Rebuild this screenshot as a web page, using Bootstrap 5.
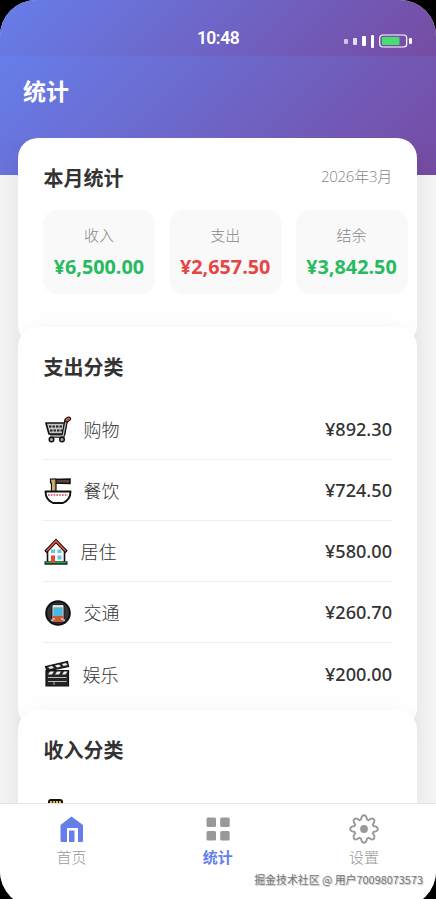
<!DOCTYPE html>
<html lang="zh-CN">
<head>
<meta charset="utf-8">
<meta name="viewport" content="width=device-width, initial-scale=1">
<title>统计</title>
<link href="https://cdn.jsdelivr.net/npm/bootstrap@5.3.0/dist/css/bootstrap.min.css" rel="stylesheet">
<style>
body{background:#000;height:899px;overflow:hidden;font-family:"Open Sans","Noto Sans CJK SC",sans-serif;color:#333}
.phone{height:907px;border-radius:36px;overflow:hidden;background:#f5f5f5}
.statusbar{height:56px;background:linear-gradient(135deg,#667eea,#764ba2);padding:20px 24px 0;color:#fff}
.clock{font-family:Roboto,sans-serif;font-size:17.5px;font-weight:600;line-height:36px;letter-spacing:-.5px}
.signal{gap:5px;margin-top:6px}
.bar{background:#fff;border-radius:1px;width:4px}
.b1{height:5px;opacity:.65}.b2{height:7px;opacity:.8}.b3{height:10px}.b4{height:13px;width:3px}
.hero{height:119px;background:linear-gradient(135deg,#667eea,#764ba2);padding:17px 23px}
.hero h1{font-size:23px;line-height:36px;font-weight:700;color:#fff;margin:0}
.content{height:665px;margin-top:-37px}
.scroller{height:665px;padding:0 19px 0 18px;overflow:hidden}
.panel{background:#fff;border-radius:20px;box-shadow:0 9px 30px rgba(0,0,0,.08);padding:26px 25px 0 25.4px}
.panel + .panel{margin-top:-18px}
.p-month{height:207px}.p-out{height:401px}.p-in{height:300px}
.panel h2{font-size:20px;line-height:30px;font-weight:700;margin:0}
.month{font-size:15px;font-weight:300;color:#888;line-height:25px;letter-spacing:-.25px}
.stats{display:grid;grid-template-columns:repeat(3,112px);gap:14.3px;margin-top:16px}
.stat{height:84px;background:#f9f9f9;border-radius:14px;padding-top:13px;text-align:center}
.stat span{display:block;font-size:15px;font-weight:300;line-height:24px;color:#888;margin-left:-1px}
.stat b{display:block;font-size:19.8px;line-height:28px;margin-top:6px;margin-left:-1px}
.inc{color:#27bb60}.exp{color:#e64545}
.rows{margin-top:16px}
.entry{height:61px;border-bottom:1px solid #eee}
.entry:last-child{border:0}
.entry svg{width:28px;height:28px;margin-left:1px;margin-right:11px;margin-top:1px;flex:none}
.entry .w-house{width:26px;margin-right:10px}
.entry .w-clap{width:27px}
.entry span{font-size:18px;font-weight:300;line-height:28px;padding-top:2px}
.entry b{font-family:"Noto Sans",sans-serif;font-size:18.1px;font-weight:500;padding-top:2px}
.tabs{height:104px;background:#fff;border-top:1px solid #e4e4e4;padding-top:10px;position:relative}
.tab-i{width:146.3px;text-align:center;color:#999;font-size:15px;font-weight:300;line-height:22px}
.tabs .first{width:143px}
.tab-i svg{display:block;width:30px;height:30px;margin:0 auto 2px}
.tab-i + .tab-i{padding-left:3px}
.tab-i.on span{color:#667eea;font-weight:700}
.credit{position:absolute;right:13px;top:66px;font-size:10.9px;line-height:18px;color:#777;white-space:nowrap;font-family:"Noto Sans CJK SC",sans-serif;text-shadow:1px 1px 1px #bbb}
</style>
<script src="https://cdn.jsdelivr.net/npm/bootstrap@5.3.0/dist/js/bootstrap.bundle.min.js"></script>
</head>
<body>
<div class="phone">
  <div class="statusbar d-flex">
    <div class="col"></div>
    <div class="clock">10:48</div>
    <div class="signal col d-flex align-items-center justify-content-end">
      <i class="bar b1"></i><i class="bar b2"></i><i class="bar b3"></i><i class="bar b4"></i>
      <svg width="33" height="14" viewBox="0 0 33 14"><rect x=".7" y="1" width="27" height="12" rx="3" fill="none" stroke="#fff" stroke-width="1.2"/><rect x="3" y="3" width="17.5" height="8" rx="1" fill="#4ade70"/><rect x="30" y="4" width="3" height="6" rx="1.2" fill="#fff"/></svg>
    </div>
  </div>
  <header class="hero"><h1>统计</h1></header>
  <main class="content"><div class="scroller">
    <section class="panel p-month">
      <div class="d-flex justify-content-between"><h2>本月统计</h2><span class="month">2026年3月</span></div>
      <div class="stats">
        <div class="stat"><span>收入</span><b class="inc">¥6,500.00</b></div>
        <div class="stat"><span>支出</span><b class="exp">¥2,657.50</b></div>
        <div class="stat"><span>结余</span><b class="inc">¥3,842.50</b></div>
      </div>
    </section>
    <section class="panel p-out">
      <h2>支出分类</h2>
      <div class="rows">
        <div class="entry d-flex align-items-center">
          <svg viewBox="0 0 28 28"><path d="M2 7H21L19.500 18H5z" fill="#c4c4c4" stroke="#111" stroke-width="1.700" stroke-linejoin="round"/><path d="M5 10.500h14M6 14.500h12.500" stroke="#222" stroke-width="1.900" stroke-dasharray="2.400 1.100"/><path d="M19.500 19L22 5l2.500-2" fill="none" stroke="#111" stroke-width="3.600" stroke-linejoin="round"/><path d="M6 20h13L22 5.500" fill="none" stroke="#111" stroke-width="3.400"/><path d="M6 20h13L22 5.500" fill="none" stroke="#b5b5b5" stroke-width="1.300"/><path d="M22.800 4l2-1.200" stroke="#111" stroke-width="4.600" stroke-linecap="round"/><path d="M22.800 4l2-1.200" stroke="#ed514b" stroke-width="2.600" stroke-linecap="round"/><circle cx="7.500" cy="23.500" r="2.300" fill="#aaa" stroke="#111" stroke-width="1.500"/><circle cx="18" cy="23.500" r="2.300" fill="#aaa" stroke="#111" stroke-width="1.500"/></svg>
          <span>购物</span><b class="ms-auto">¥892.30</b></div>
        <div class="entry d-flex align-items-center">
          <svg viewBox="0 0 28 28"><path d="M9 2.500l17-.5v4.500L9 6z" fill="#5c4438" stroke="#111" stroke-width="1.500"/><path d="M6.500 2h5.500v13H7.500V6h-1z" fill="#b99c62" stroke="#111" stroke-width="1.200"/><path d="M9 3v11" stroke="#e3cb91" stroke-width="1"/><path d="M1.500 14.500h25c0 6-3 9.500-7.500 11.500H9c-4.500-2-7.500-5.500-7.500-11.500z" fill="#fff" stroke="#111" stroke-width="1.900" stroke-linejoin="round"/><path d="M4 18h20" stroke="#df3455" stroke-width="1.500" stroke-dasharray="1.600 1.200"/></svg>
          <span>餐饮</span><b class="ms-auto">¥724.50</b></div>
        <div class="entry d-flex align-items-center">
          <svg class="w-house" viewBox="0 0 26 28"><path d="M3.500 12L12 3l8.500 9v13h-17z" fill="#fff7f3" stroke="#111" stroke-width="1.600"/><path d="M1.500 14L12 3l10.500 11" fill="none" stroke="#111" stroke-width="3.400"/><path d="M2.500 13L12 3l9.500 10" fill="none" stroke="#ef5540" stroke-width="1.600"/><path d="M.500 25h23" stroke="#111" stroke-width="3.400"/><path d="M1.500 24.500h21" stroke="#22a84b" stroke-width="1.700"/><path d="M7 17.500h4V25H7z" fill="#df4938"/><path d="M7 11.500h4v3.500H7zM13.500 11.500h4v3.500h-4zM13.500 17.500h4v4h-4z" fill="#59c9ed"/></svg>
          <span>居住</span><b class="ms-auto">¥580.00</b></div>
        <div class="entry d-flex align-items-center">
          <svg viewBox="0 0 28 28"><circle cx="14" cy="14" r="11.800" fill="#343434" stroke="#111" stroke-width="2"/><path d="M8 6h12v13l2 3-3 1H9l-3-1 2-3z" fill="#ccc" stroke="#111" stroke-width=".8"/><path d="M9 7h10" stroke="#eee" stroke-width="1.600"/><path d="M9.500 8.500h9V17h-9z" fill="#49b9df"/><path d="M8.500 17h11v4l-2 2h-7l-2-2z" fill="#c95a35"/><path d="M9 20h2M17 20h2" stroke="#fff"/></svg>
          <span>交通</span><b class="ms-auto">¥260.70</b></div>
        <div class="entry d-flex align-items-center">
          <svg class="w-clap" viewBox="0 0 27 28"><path d="M1.500 6.500l22-5 1 5L3 11zM2 10.500h22.500V26H2z" fill="#252525" stroke="#111" stroke-width="1.200"/><path d="M4 7l4-1 2 2-4 1zM11 5.500l4-1 2 2-4 1zM18 4l4-1 1.500 2-4 1zM6 11.500h4l-2 3H4zM13 11.500h4l-2 3h-4zM20 11.500h3.500l-2 3H18z" fill="#eee"/><path d="M4 17.500h18.500M4 21.500h18.500M10 21.500V25" stroke="#bbb" stroke-width="1"/></svg>
          <span>娱乐</span><b class="ms-auto">¥200.00</b></div>
      </div>
    </section>
    <section class="panel p-in">
      <h2>收入分类</h2>
      <div class="rows"><div class="entry d-flex align-items-center">
        <svg viewBox="0 0 28 28"><rect x="5" y="1" width="13" height="25" rx="2" fill="#222" stroke="#111" stroke-width="2"/><path d="M6 3h11" stroke="#e7bd3c" stroke-width="2" stroke-dasharray="2 1"/></svg></div></div>
    </section>
  </div></main>
  <nav class="tabs d-flex">
    <div class="tab-i first"><svg viewBox="0 0 30 30"><path d="M14.500 2.500L26 11v15.500a1.500 1.500 0 0 1-1.500 1.500h-3.500V14H10v14H5A1.500 1.500 0 0 1 3.500 26.500V11z" fill="#667eea"/><path d="M12 16.500h5.500V28H12z" fill="#667eea"/></svg><span>首页</span></div>
    <div class="tab-i on"><svg viewBox="0 0 30 30" fill="#999"><rect x="3.500" y="3.500" width="9.500" height="9.500" rx="1.500"/><rect x="17.200" y="3.500" width="9.500" height="9.500" rx="1.500"/><rect x="3.500" y="17" width="9.500" height="9.500" rx="1.500"/><rect x="17.200" y="17" width="9.500" height="9.500" rx="1.500"/></svg><span>统计</span></div>
    <div class="tab-i"><svg viewBox="0 0 30 30"><path d="M12 5.500C12.500 2.500 13 1.200 15 1.200s2.500 1.300 3 4.300l1.500.7c2.500-1.800 4-2.300 5.300-1s.8 2.800-1 5.300l.7 1.500c3 .5 4.300 1 4.300 3s-1.300 2.500-4.300 3l-.7 1.500c1.800 2.500 2.300 4 1 5.300s-2.800.8-5.300-1l-1.500.7c-.5 3-1 4.300-3 4.300s-2.500-1.300-3-4.300l-1.500-.7c-2.500 1.800-4 2.300-5.300 1s-.8-2.800 1-5.300L5.500 18c-3-.5-4.300-1-4.300-3s1.300-2.500 4.300-3l.7-1.500c-1.800-2.500-2.300-4-1-5.300s2.800-.8 5.300 1z" fill="none" stroke="#999" stroke-width="1.900" stroke-linejoin="round"/><circle cx="15" cy="15" r="3.900" fill="#999"/></svg><span>设置</span></div>
    <div class="credit">掘金技术社区 @ 用户70098073573</div>
  </nav>
</div>
</body>
</html>
